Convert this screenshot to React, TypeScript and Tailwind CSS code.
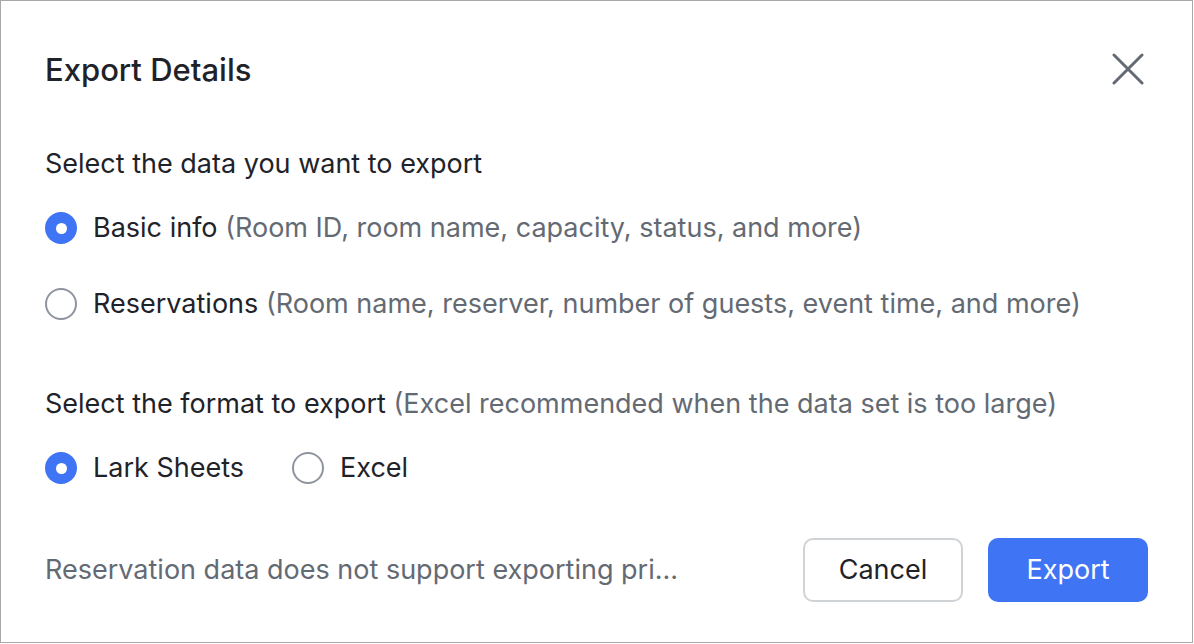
import React from "react";

function Radio({ checked }: { checked: boolean }) {
  return checked ? (
    <span className="flex h-[32px] w-[32px] shrink-0 items-center justify-center rounded-full bg-[#3f75f5]">
      <span className="h-[11px] w-[11px] rounded-full bg-white" />
    </span>
  ) : (
    <span className="h-[32px] w-[32px] shrink-0 rounded-full border-2 border-[#8f959e] bg-white" />
  );
}

export default function App() {
  return (
    <div
      className="h-[644px] w-[1194px] bg-white"
      style={{ fontFamily: "Inter, 'Noto Sans', sans-serif" }}
    >
      <div className="flex h-[643px] w-[1193px] flex-col border border-[#a8a8a8] px-[44px] text-[#1f2329]">
        <div className="flex h-[140px] items-center justify-between pb-[1px]">
          <h1 className="text-[31px] font-medium">Export Details</h1>
          <svg
            width="32"
            height="32"
            viewBox="0 0 32 32"
            className="mb-[3px] mr-[4px]"
            fill="none"
            stroke="#646a73"
            strokeWidth="3"
            strokeLinecap="round"
          >
            <path d="M2 2L30 30M30 2L2 30" />
          </svg>
        </div>
        <div className="mt-[3px] text-[27px] leading-[40px]">Select the data you want to export</div>
        <div className="mt-[24px] flex flex-col gap-[36px] text-[27px] leading-[40px]">
          <label className="flex items-center gap-[16px]">
            <Radio checked />
            <span>
              Basic info <span className="text-[#646a73]">(Room ID, room name, capacity, status, and more)</span>
            </span>
          </label>
          <label className="flex items-center gap-[16px]">
            <Radio checked={false} />
            <span>
              Reservations <span className="text-[#646a73]">(Room name, reserver, number of guests, event time, and more)</span>
            </span>
          </label>
        </div>
        <div className="mt-[60px] text-[27px] leading-[40px]">
          Select the format to export{" "}
          <span className="text-[#646a73]">(Excel recommended when the data set is too large)</span>
        </div>
        <div className="mt-[24px] flex items-center gap-[48px] text-[27px] leading-[40px]">
          <label className="flex items-center gap-[16px]">
            <Radio checked />
            <span>Lark Sheets</span>
          </label>
          <label className="flex items-center gap-[16px]">
            <Radio checked={false} />
            <span>Excel</span>
          </label>
        </div>
        <div className="mt-[50px] flex items-center justify-between">
          <div className="whitespace-nowrap text-[27px] text-[#646a73]">
            Reservation data does not support exporting pri...
          </div>
          <div className="flex gap-[25px]">
            <button className="h-[64px] w-[160px] rounded-[10px] border-2 border-[#d0d3d6] bg-white text-[27px] text-[#1f2329]">
              Cancel
            </button>
            <button className="h-[64px] w-[160px] rounded-[10px] bg-[#3f75f5] text-[27px] text-white">
              Export
            </button>
          </div>
        </div>
      </div>
    </div>
  );
}
